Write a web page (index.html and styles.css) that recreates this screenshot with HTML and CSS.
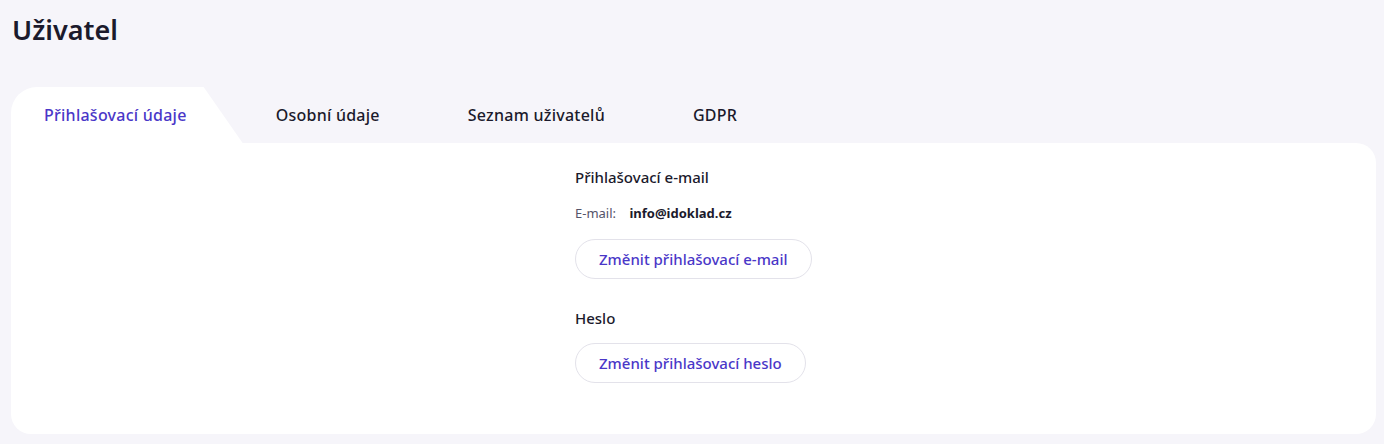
FILE: index.html
```html
<!DOCTYPE html>
<html lang="cs">
<head>
    <meta charset="utf-8">
    <title>Uživatel</title>
    <link rel="stylesheet" href="styles.css">
</head>
<body>
    <h1 class="page-title">Uživatel</h1>

    <div class="tabs">
        <div class="tab active">Přihlašovací údaje</div>
        <div class="tab">Osobní údaje</div>
        <div class="tab">Seznam uživatelů</div>
        <div class="tab">GDPR</div>
    </div>

    <div class="card">
        <div class="section">
            <h2 class="section-title">Přihlašovací e-mail</h2>
            <div class="field">
                <span class="field-label">E-mail:</span>
                <span class="field-value">info@idoklad.cz</span>
            </div>
            <button class="btn-outline">Změnit přihlašovací e-mail</button>
        </div>

        <div class="section">
            <h2 class="section-title">Heslo</h2>
            <button class="btn-outline">Změnit přihlašovací heslo</button>
        </div>
    </div>
</body>
</html>
```

FILE: styles.css
```css
body {
    margin: 0;
    padding: 0 8px 0 11px;
    background-color: #f6f5fa;
    font-family: "Noto Sans", Arial, sans-serif;
    color: #1b1a2c;
}

.page-title {
    margin: 0;
    padding: 14px 0 0 1px;
    height: 87px;
    box-sizing: border-box;
    font-size: 27px;
    font-weight: 600;
    line-height: 32px;
}

.tabs {
    display: flex;
    height: 56px;
}

.tab {
    line-height: 56px;
    padding: 0 44px;
    font-size: 16px;
    font-weight: 500;
    letter-spacing: 0.25px;
    color: #1b1a2c;
}

.tab.active {
    padding: 0 56px 0 33px;
    color: #4a37c8;
    background-color: white;
    border-top-left-radius: 26px;
    clip-path: polygon(0 0, calc(100% - 39px) 0, 100% 100%, 0 100%);
}

.tab.active + .tab {
    padding-left: 33px;
}

.card {
    background-color: white;
    border-radius: 0 20px 20px 20px;
    padding: 25px 20px 51px 564px;
}

.section + .section {
    margin-top: 30px;
}

.section-title {
    margin: 0;
    font-size: 15px;
    font-weight: 500;
    line-height: 18px;
}

.field {
    margin-top: 19px;
    font-size: 13px;
    line-height: 16px;
}

.field-label {
    color: #55546a;
    margin-right: 10px;
}

.field-value {
    font-weight: 700;
}

.btn-outline {
    display: block;
    margin-top: 18px;
    height: 40px;
    padding: 0 23px;
    border: 1px solid #e3e2ea;
    border-radius: 20px;
    background-color: white;
    font-family: inherit;
    font-size: 15px;
    font-weight: 500;
    color: #4a37c8;
    cursor: pointer;
}

.section + .section .btn-outline {
    margin-top: 16px;
}
```
